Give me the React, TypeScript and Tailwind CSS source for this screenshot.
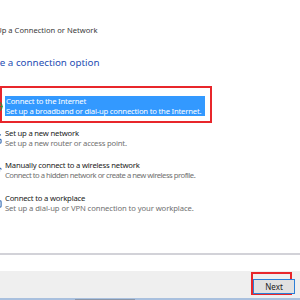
import { Globe, Router, Wifi, Briefcase } from "lucide-react";

const options = [
  {
    title: "Connect to the Internet",
    desc: "Set up a broadband or dial-up connection to the Internet.",
    icon: Globe,
    gap: "mt-0",
    tight: "tracking-[-0.2px]",
  },
  {
    title: "Set up a new network",
    desc: "Set up a new router or access point.",
    icon: Router,
    gap: "mt-[5px]",
    tight: "tracking-[-0.2px]",
  },
  {
    title: "Manually connect to a wireless network",
    desc: "Connect to a hidden network or create a new wireless profile.",
    icon: Wifi,
    gap: "mt-[12px]",
    tight: "tracking-[-0.5px]",
  },
  {
    title: "Connect to a workplace",
    desc: "Set up a dial-up or VPN connection to your workplace.",
    icon: Briefcase,
    gap: "mt-[13px]",
    tight: "tracking-[-0.1px]",
  },
];

export default function App() {
  return (
    <div className="relative flex h-[300px] w-[300px] flex-col overflow-hidden bg-white font-['Noto_Sans',sans-serif]">
      <div className="h-[24px]" />
      <p className="ml-[-17px] whitespace-nowrap text-[7.6px] leading-[12px] text-[#3a3a3a]">
        Set Up a Connection or Network
      </p>
      <p className="ml-[-29px] mt-[19px] whitespace-nowrap text-[9.8px] leading-[16px] text-[#1f4eb4]">
        Choose a connection option
      </p>

      <div className="mt-[15px] flex flex-col">
        <div className="w-[212px] border-2 border-[#e8262b] pb-[5px] pt-[8px]">
          <div className="flex items-center">
            <div className="ml-[-13px] flex w-[16px] justify-center text-[#2f8f3a]">
              <Globe size={11} strokeWidth={2.5} />
            </div>
            <div className="w-[200px] bg-[#3399ff] px-[1px] text-white">
              <p className="whitespace-nowrap text-[7.7px] leading-[10px] tracking-[-0.2px]">Connect to the Internet</p>
              <p className="whitespace-nowrap text-[7.7px] leading-[10px] tracking-[-0.2px]">
                Set up a broadband or dial-up connection to the Internet.
              </p>
            </div>
          </div>
        </div>

        {options.slice(1).map((o) => {
          const Icon = o.icon;
          return (
            <div key={o.title} className={`${o.gap} flex items-center`}>
              <div className="ml-[-12px] flex w-[16px] justify-center text-[#3b6fb6]">
                <Icon size={11} strokeWidth={2.5} />
              </div>
              <div className="px-[1px]">
                <p className="whitespace-nowrap text-[7.7px] leading-[10px] tracking-[-0.2px] text-[#1a1a1a]">{o.title}</p>
                <p className={`whitespace-nowrap text-[7.7px] leading-[10px] text-[#707070] ${o.tight}`}>{o.desc}</p>
              </div>
            </div>
          );
        })}
      </div>

      <div className="mt-auto h-[2px] bg-[#d2d2d8]" />
      <div className="h-[16px] bg-white" />
      <div className="flex h-[27px] items-start justify-end bg-[#efefef] pr-[8px] pt-[1px]">
        <div className="h-[23px] w-[41px] border-2 border-[#e8262b] pt-[5px]">
          <button
            type="button"
            className="block h-[15px] w-[42px] border border-[#2d7fd6] bg-[#e1e1e1] text-[8px] leading-[12px] text-[#1a1a1a]"
          >
            Next
          </button>
        </div>
      </div>
      <div className="flex h-[2px] bg-[#a9c0de]">
        <div className="ml-[75px] h-[1px] w-[60px] self-end bg-[#8a96a8]" />
      </div>
    </div>
  );
}
